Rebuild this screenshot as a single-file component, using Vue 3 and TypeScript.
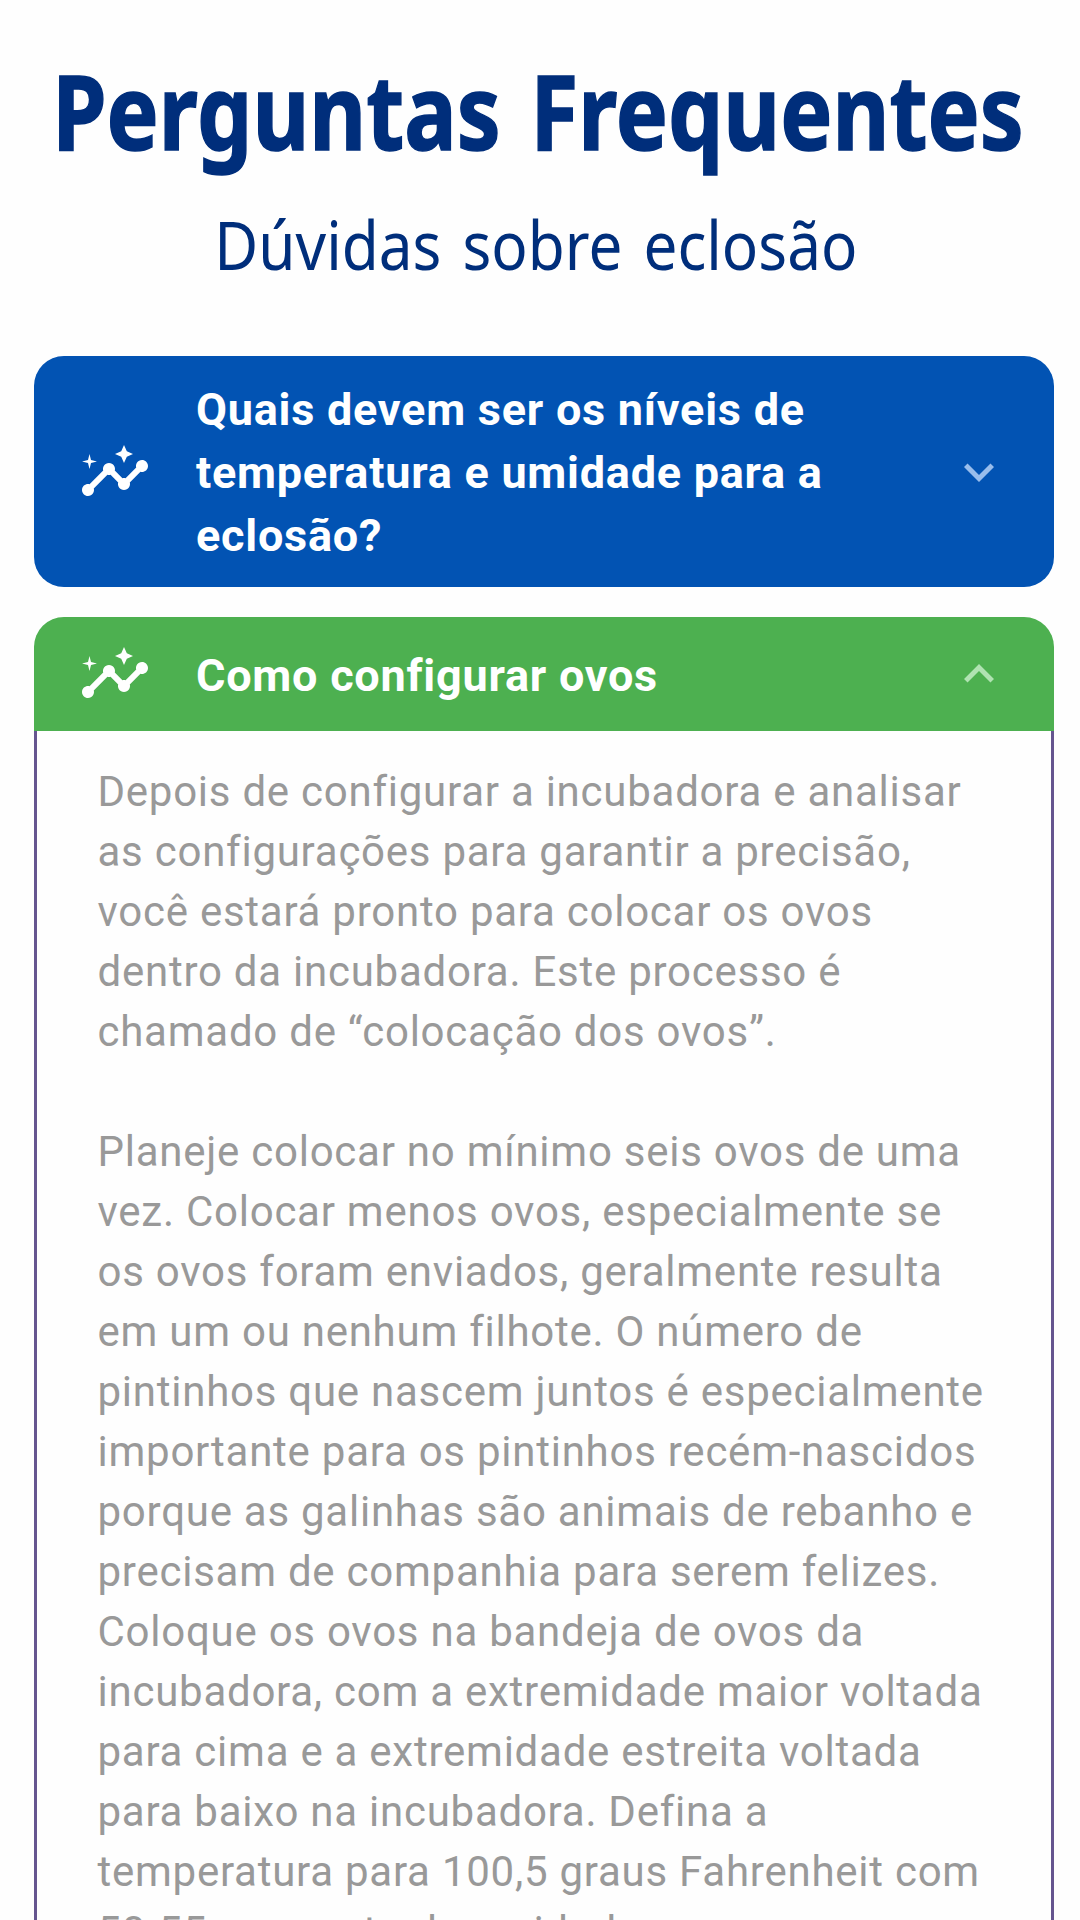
<script setup lang="ts">
interface FaqItem {
  question: string
  answer: string
  open: boolean
}

const items: FaqItem[] = [
  {
    question: 'Quais devem ser os níveis de\ntemperatura e umidade para a\neclosão?',
    answer: '',
    open: false,
  },
  {
    question: 'Como configurar ovos',
    answer: `Depois de configurar a incubadora e analisar
as configurações para garantir a precisão,
você estará pronto para colocar os ovos
dentro da incubadora. Este processo é
chamado de “colocação dos ovos”.

Planeje colocar no mínimo seis ovos de uma
vez. Colocar menos ovos, especialmente se
os ovos foram enviados, geralmente resulta
em um ou nenhum filhote. O número de
pintinhos que nascem juntos é especialmente
importante para os pintinhos recém-nascidos
porque as galinhas são animais de rebanho e
precisam de companhia para serem felizes.
Coloque os ovos na bandeja de ovos da
incubadora, com a extremidade maior voltada
para cima e a extremidade estreita voltada
para baixo na incubadora. Defina a
temperatura para 100,5 graus Fahrenheit com
50-55 por cento de umidade.`,
    open: true,
  },
]
</script>

<template>
  <main class="page">
    <header class="heading">
      <h1><span>Perguntas Frequentes</span></h1>
      <h2><span>Dúvidas sobre eclosão</span></h2>
    </header>
    <section class="list">
      <article v-for="item in items" :key="item.question" class="item" :class="{ open: item.open }">
        <div class="bar">
          <svg class="insights" viewBox="0 0 24 24" fill="currentColor">
            <path d="M21 8c-1.45 0-2.26 1.44-1.93 2.51l-3.55 3.56c-.3-.09-.74-.09-1.04 0l-2.55-2.55C12.27 10.45 11.46 9 10 9c-1.45 0-2.27 1.44-1.93 2.52l-4.56 4.55C2.44 15.74 1 16.55 1 18c0 1.1.9 2 2 2 1.45 0 2.26-1.44 1.93-2.51l4.55-4.56c.3.09.74.09 1.04 0l2.55 2.55C12.73 16.55 13.54 18 15 18c1.45 0 2.27-1.44 1.93-2.52l3.56-3.55C21.56 12.26 23 11.45 23 10c0-1.1-.9-2-2-2z" />
            <path d="M15 9l.94-2.07L18 6l-2.06-.93L15 3l-.92 2.07L12 6l2.08.93zM3.5 11L4 9l2-.5L4 8l-.5-2L3 8l-2 .5L3 9z" />
          </svg>
          <h3>{{ item.question }}</h3>
          <svg class="chevron" viewBox="0 0 24 24" fill="currentColor">
            <path v-if="item.open" d="M12 8l-6 6 1.41 1.41L12 10.83l4.59 4.58L18 14z" />
            <path v-else d="M16.59 8.59L12 13.17 7.41 8.59 6 10l6 6 6-6z" />
          </svg>
        </div>
        <p v-if="item.open" class="answer">{{ item.answer }}</p>
      </article>
    </section>
  </main>
</template>

<style>
body {
  background: #fefefe;
}
</style>

<style scoped>
.page {
  box-sizing: border-box;
  width: 1080px;
  height: 1920px;
  overflow: hidden;
  background: #fefefe;
  font-family: Roboto, sans-serif;
}
.heading {
  height: 356px;
  box-sizing: border-box;
  padding: 40px 5px 0 0;
  color: #002e7b;
  font-family: "Noto Sans", sans-serif;
  text-align: center;
}
h1,
h2,
h3,
p {
  margin: 0;
}
h1 {
  font-size: 104px;
  font-weight: 700;
  line-height: 140px;
  white-space: nowrap;
  word-spacing: 8px;
  display: flex;
  justify-content: center;
  -webkit-text-stroke: 1.5px #002e7b;
}
h2 {
  margin-top: 14px;
  padding-right: 4px;
  font-size: 68px;
  font-weight: 400;
  line-height: 100px;
  white-space: nowrap;
  word-spacing: 6px;
  display: flex;
  justify-content: center;
}
h1 span {
  transform: scaleX(0.842);
}
h2 span {
  transform: scaleX(0.886);
}
.list {
  display: flex;
  flex-direction: column;
  gap: 30px;
  padding: 0 26px 0 34px;
}
.bar {
  box-sizing: border-box;
  display: flex;
  align-items: center;
  height: 114px;
  padding: 0 45px;
  border-radius: 30px;
  background: #0253b3;
  color: #fff;
}
.item:not(.open) .bar {
  height: 231px;
}
.open .bar {
  border-radius: 30px 30px 0 0;
  background: #4db050;
}
.insights {
  flex: none;
  width: 72px;
  height: 72px;
}
h3 {
  flex: 1;
  margin-left: 45px;
  padding-top: 2px;
  font-size: 45px;
  font-weight: 700;
  line-height: 63px;
  letter-spacing: 0.75px;
  white-space: pre;
}
.chevron {
  flex: none;
  width: 60px;
  height: 60px;
  color: #99bdec;
}
.open .chevron {
  color: #b0e3b2;
}
.answer {
  height: 1300px;
  padding: 31px 60px 0 60.5px;
  border: solid #65558f;
  border-width: 0 3px;
  color: #999;
  font-size: 42px;
  line-height: 60px;
  letter-spacing: 0.75px;
  white-space: pre;
}
</style>
